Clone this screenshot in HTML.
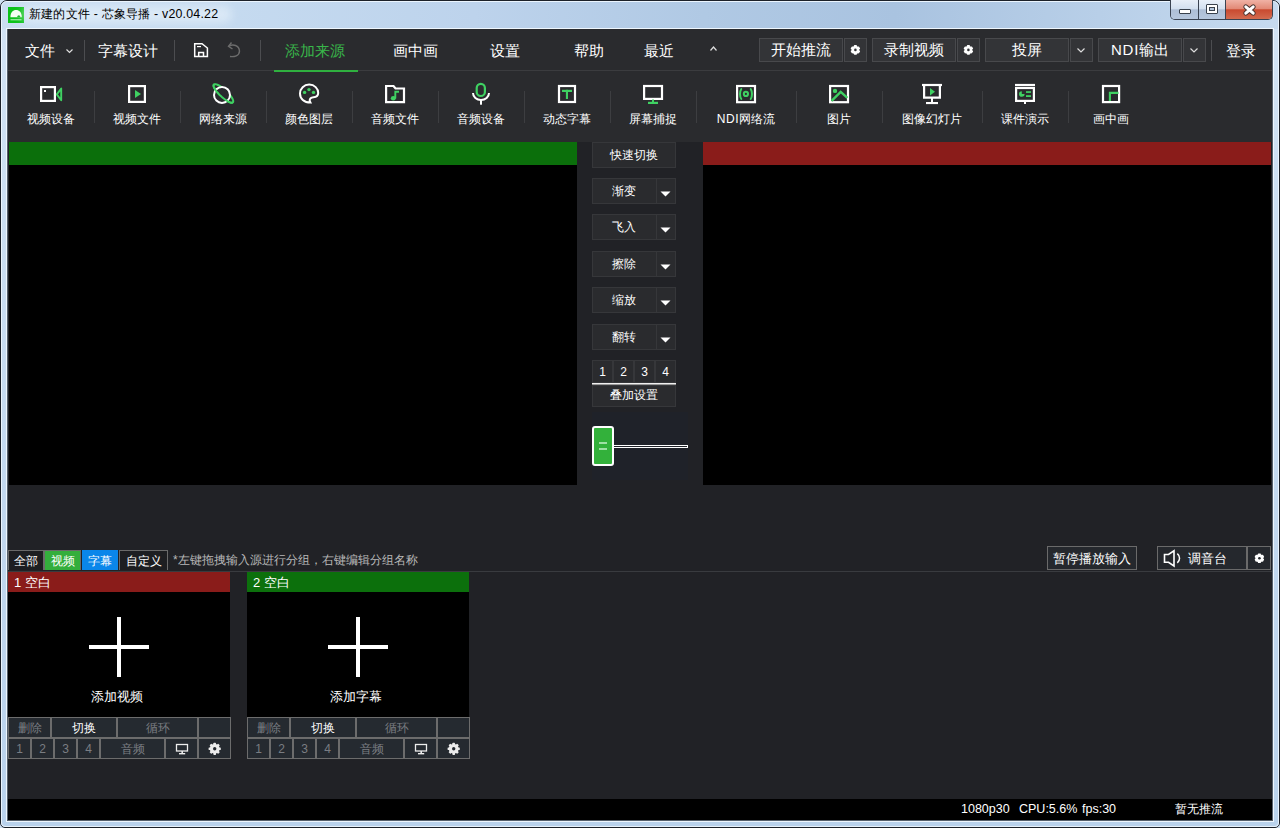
<!DOCTYPE html>
<html><head><meta charset="utf-8">
<style>
*{margin:0;padding:0;box-sizing:border-box}
html,body{width:1280px;height:828px;overflow:hidden;background:#cfe0f2;font-family:"Liberation Sans",sans-serif;color:#fff}
.a{position:absolute}
.t{white-space:nowrap;line-height:1}
.bx{position:absolute;border:1px solid #48494c;background:#323336}
</style></head><body>

<div class="a" style="left:0px;top:0px;width:1280px;height:828px;background:linear-gradient(#d2e3f4,#c2d8ef 60%,#b9d2ec);border:1px solid #1c2129;border-radius:7px 7px 5px 5px"></div>
<div class="a" style="left:1px;top:1px;width:1278px;height:826px;background:transparent;border:1px solid rgba(240,248,255,0.85);border-radius:6px 6px 4px 4px"></div>
<div class="a" style="left:2px;top:2px;width:1276px;height:27px;background:linear-gradient(90deg,#cadef2 0,#c6dbf0 16%,#bdd3ec 37%,#b0c9e4 55%,#a9c3e0 70%,#b8cfe8 86%,#c6daef 100%);border-radius:5px 5px 0 0"></div>
<div class="a" style="left:6px;top:28px;width:1268px;height:794px;background:#eef6fd;"></div>
<div class="a" style="left:7px;top:29px;width:1266px;height:792px;background:#55606c;"></div>
<div class="a" style="left:8px;top:29px;width:1264px;height:791px;background:#222327;"></div>
<svg class="a" style="left:8px;top:7px" width="16" height="16" viewBox="0 0 16 16"><rect width="16" height="16" fill="#0cc21a"/><path d="M2.4,10.2 C2.4,5.2 5,2.9 8.1,2.9 C11.2,2.9 13.8,5.2 13.8,10.2 Z" fill="#f4fff2"/><path d="M9.2,10.3 C9.2,7.5 12.4,7.5 12.4,10.3 Z" fill="#12b21e"/><rect x="2.5" y="12" width="11" height="1.4" fill="#8fe596"/></svg>
<div class="a" style="left:22px;top:6px;width:210px;height:17px;background:rgba(235,244,252,0.55);border-radius:9px;filter:blur(4px)"></div>
<div class="a t" style="left:29px;top:8px;font-size:12.4px;color:#000;letter-spacing:0.2px">新建的文件 - 芯象导播 - v20.04.22</div>
<div class="a" style="left:1170px;top:0;width:103px;height:20px;border:1px solid #3a4351;border-top:none;border-radius:0 0 5px 5px;overflow:hidden;display:flex">
  <div style="width:28px;height:19px;background:linear-gradient(#e8eff8,#d3e0ef 45%,#aebfd6 52%,#b6c7dd);border-right:1px solid #3a4351;position:relative"><div class="a" style="left:8px;top:9px;width:12px;height:5px;background:#fff;border:1px solid #39414c;border-radius:1px"></div></div>
  <div style="width:27px;height:19px;background:linear-gradient(#e8eff8,#d3e0ef 45%,#aebfd6 52%,#b6c7dd);border-right:1px solid #3a4351;position:relative"><div class="a" style="left:7px;top:4px;width:12px;height:10px;background:#fff;border:1px solid #39414c;border-radius:1px"><div class="a" style="left:2px;top:2px;width:6px;height:4px;background:#b4c6dc;border:1px solid #39414c"></div></div></div>
  <div style="width:46px;height:19px;background:linear-gradient(#f0b2a5,#e28a77 45%,#c94a30 52%,#d36b4f);position:relative">
   <svg class="a" style="left:0;top:0" width="46" height="19"><path d="M19.8,6.8 L27.2,13.2 M27.2,6.8 L19.8,13.2" stroke="#4a3430" stroke-width="5" stroke-linecap="round"/><path d="M19.8,6.8 L27.2,13.2 M27.2,6.8 L19.8,13.2" stroke="#fff" stroke-width="3" stroke-linecap="round"/></svg></div>
</div>
<div class="a" style="left:8px;top:29px;width:1264px;height:113px;background:#2a2b2e;"></div>
<div class="a" style="left:8px;top:70px;width:1264px;height:1px;background:#3b3c3f;"></div>
<div class="a t" style="left:25px;top:43px;font-size:15px;color:#fff;">文件</div>
<svg class="a" style="left:0;top:0;overflow:visible" width="1" height="1"></svg>
<div class="a" style="left:84px;top:40px;width:1px;height:21px;background:#4c4d50;"></div>
<div class="a" style="left:174px;top:40px;width:1px;height:21px;background:#4c4d50;"></div>
<div class="a" style="left:260px;top:40px;width:1px;height:21px;background:#4c4d50;"></div>
<div class="a" style="left:1211px;top:40px;width:1px;height:21px;background:#4c4d50;"></div>
<div class="a t" style="left:98px;top:43px;font-size:15px;color:#fff;">字幕设计</div>
<div class="a t" style="left:285px;top:43px;font-size:15px;color:#39b54a;">添加来源</div>
<div class="a" style="left:274px;top:70px;width:84px;height:2px;background:#2fb03f;"></div>
<div class="a t" style="left:393px;top:43px;font-size:15px;color:#fff;">画中画</div>
<div class="a t" style="left:490px;top:43px;font-size:15px;color:#fff;">设置</div>
<div class="a t" style="left:574px;top:43px;font-size:15px;color:#fff;">帮助</div>
<div class="a t" style="left:644px;top:43px;font-size:15px;color:#fff;">最近</div>
<div class="bx" style="left:759px;top:38px;width:84px;height:24px;background:#333437"></div>
<div class="bx" style="left:844px;top:38px;width:23px;height:24px;background:#333437"></div>
<div class="a t" style="left:651.0px;width:300px;text-align:center;top:42px;font-size:15px;color:#fff;">开始推流</div>
<div class="bx" style="left:872px;top:38px;width:84px;height:24px;background:#333437"></div>
<div class="bx" style="left:957px;top:38px;width:23px;height:24px;background:#333437"></div>
<div class="a t" style="left:764.0px;width:300px;text-align:center;top:42px;font-size:15px;color:#fff;">录制视频</div>
<div class="bx" style="left:985px;top:38px;width:84px;height:24px;background:#333437"></div>
<div class="bx" style="left:1070px;top:38px;width:23px;height:24px;background:#333437"></div>
<div class="a t" style="left:877.0px;width:300px;text-align:center;top:42px;font-size:15px;color:#fff;">投屏</div>
<div class="bx" style="left:1098px;top:38px;width:84px;height:24px;background:#333437"></div>
<div class="bx" style="left:1183px;top:38px;width:23px;height:24px;background:#333437"></div>
<div class="a t" style="left:990.0px;width:300px;text-align:center;top:42px;font-size:15px;color:#fff;"><span style="letter-spacing:0.8px">NDI</span>输出</div>
<div class="a t" style="left:1226px;top:43px;font-size:15px;color:#fff;">登录</div>
<div class="a t" style="left:-99px;width:300px;text-align:center;top:113px;font-size:12px;color:#fff;">视频设备</div>
<div class="a t" style="left:-13px;width:300px;text-align:center;top:113px;font-size:12px;color:#fff;">视频文件</div>
<div class="a t" style="left:73px;width:300px;text-align:center;top:113px;font-size:12px;color:#fff;">网络来源</div>
<div class="a t" style="left:159px;width:300px;text-align:center;top:113px;font-size:12px;color:#fff;">颜色图层</div>
<div class="a t" style="left:245px;width:300px;text-align:center;top:113px;font-size:12px;color:#fff;">音频文件</div>
<div class="a t" style="left:331px;width:300px;text-align:center;top:113px;font-size:12px;color:#fff;">音频设备</div>
<div class="a t" style="left:417px;width:300px;text-align:center;top:113px;font-size:12px;color:#fff;">动态字幕</div>
<div class="a t" style="left:503px;width:300px;text-align:center;top:113px;font-size:12px;color:#fff;">屏幕捕捉</div>
<div class="a t" style="left:596px;width:300px;text-align:center;top:113px;font-size:12px;color:#fff;"><span style="letter-spacing:0.6px">NDI</span>网络流</div>
<div class="a t" style="left:689px;width:300px;text-align:center;top:113px;font-size:12px;color:#fff;">图片</div>
<div class="a t" style="left:782px;width:300px;text-align:center;top:113px;font-size:12px;color:#fff;">图像幻灯片</div>
<div class="a t" style="left:875px;width:300px;text-align:center;top:113px;font-size:12px;color:#fff;">课件演示</div>
<div class="a t" style="left:961px;width:300px;text-align:center;top:113px;font-size:12px;color:#fff;">画中画</div>
<div class="a" style="left:94px;top:91px;width:1px;height:32px;background:#3d3e41;"></div>
<div class="a" style="left:180px;top:91px;width:1px;height:32px;background:#3d3e41;"></div>
<div class="a" style="left:266px;top:91px;width:1px;height:32px;background:#3d3e41;"></div>
<div class="a" style="left:352px;top:91px;width:1px;height:32px;background:#3d3e41;"></div>
<div class="a" style="left:438px;top:91px;width:1px;height:32px;background:#3d3e41;"></div>
<div class="a" style="left:524px;top:91px;width:1px;height:32px;background:#3d3e41;"></div>
<div class="a" style="left:610px;top:91px;width:1px;height:32px;background:#3d3e41;"></div>
<div class="a" style="left:696px;top:91px;width:1px;height:32px;background:#3d3e41;"></div>
<div class="a" style="left:796px;top:91px;width:1px;height:32px;background:#3d3e41;"></div>
<div class="a" style="left:882px;top:91px;width:1px;height:32px;background:#3d3e41;"></div>
<div class="a" style="left:982px;top:91px;width:1px;height:32px;background:#3d3e41;"></div>
<div class="a" style="left:1068px;top:91px;width:1px;height:32px;background:#3d3e41;"></div>
<div class="a" style="left:9px;top:142px;width:568px;height:343px;background:#000;"></div>
<div class="a" style="left:9px;top:142px;width:568px;height:23px;background:#0b6f0b;"></div>
<div class="a" style="left:577px;top:142px;width:126px;height:343px;background:#212226;"></div>
<div class="a" style="left:703px;top:142px;width:568px;height:343px;background:#000;"></div>
<div class="a" style="left:703px;top:142px;width:568px;height:23px;background:#8a1c1a;"></div>
<div class="a" style="left:592px;top:142px;width:84px;height:26px;background:#2a2b2e;border:1px solid #36373a"></div>
<div class="a t" style="left:484px;width:300px;text-align:center;top:149px;font-size:12px;color:#fff;">快速切换</div>
<div class="a" style="left:592px;top:178px;width:84px;height:26px;background:#2a2b2e;border:1px solid #36373a"></div>
<div class="a" style="left:656px;top:179px;width:1px;height:24px;background:#36373a;"></div>
<div class="a t" style="left:474px;width:300px;text-align:center;top:185px;font-size:12px;color:#fff;">渐变</div>
<svg class="a" style="left:660px;top:191px" width="11" height="6"><path d="M0.5,0.5 L10.5,0.5 L5.5,5.5Z" fill="#fff"/></svg>
<div class="a" style="left:592px;top:214px;width:84px;height:26px;background:#2a2b2e;border:1px solid #36373a"></div>
<div class="a" style="left:656px;top:215px;width:1px;height:24px;background:#36373a;"></div>
<div class="a t" style="left:474px;width:300px;text-align:center;top:221px;font-size:12px;color:#fff;">飞入</div>
<svg class="a" style="left:660px;top:227px" width="11" height="6"><path d="M0.5,0.5 L10.5,0.5 L5.5,5.5Z" fill="#fff"/></svg>
<div class="a" style="left:592px;top:251px;width:84px;height:26px;background:#2a2b2e;border:1px solid #36373a"></div>
<div class="a" style="left:656px;top:252px;width:1px;height:24px;background:#36373a;"></div>
<div class="a t" style="left:474px;width:300px;text-align:center;top:258px;font-size:12px;color:#fff;">擦除</div>
<svg class="a" style="left:660px;top:264px" width="11" height="6"><path d="M0.5,0.5 L10.5,0.5 L5.5,5.5Z" fill="#fff"/></svg>
<div class="a" style="left:592px;top:287px;width:84px;height:26px;background:#2a2b2e;border:1px solid #36373a"></div>
<div class="a" style="left:656px;top:288px;width:1px;height:24px;background:#36373a;"></div>
<div class="a t" style="left:474px;width:300px;text-align:center;top:294px;font-size:12px;color:#fff;">缩放</div>
<svg class="a" style="left:660px;top:300px" width="11" height="6"><path d="M0.5,0.5 L10.5,0.5 L5.5,5.5Z" fill="#fff"/></svg>
<div class="a" style="left:592px;top:324px;width:84px;height:26px;background:#2a2b2e;border:1px solid #36373a"></div>
<div class="a" style="left:656px;top:325px;width:1px;height:24px;background:#36373a;"></div>
<div class="a t" style="left:474px;width:300px;text-align:center;top:331px;font-size:12px;color:#fff;">翻转</div>
<svg class="a" style="left:660px;top:337px" width="11" height="6"><path d="M0.5,0.5 L10.5,0.5 L5.5,5.5Z" fill="#fff"/></svg>
<div class="a" style="left:592px;top:360px;width:21px;height:23px;background:#2a2b2e;border:1px solid #36373a"></div>
<div class="a t" style="left:452.5px;width:300px;text-align:center;top:366px;font-size:12px;color:#fff;">1</div>
<div class="a" style="left:613px;top:360px;width:21px;height:23px;background:#2a2b2e;border:1px solid #36373a"></div>
<div class="a t" style="left:473.5px;width:300px;text-align:center;top:366px;font-size:12px;color:#fff;">2</div>
<div class="a" style="left:634px;top:360px;width:21px;height:23px;background:#2a2b2e;border:1px solid #36373a"></div>
<div class="a t" style="left:494.5px;width:300px;text-align:center;top:366px;font-size:12px;color:#fff;">3</div>
<div class="a" style="left:655px;top:360px;width:21px;height:23px;background:#2a2b2e;border:1px solid #36373a"></div>
<div class="a t" style="left:515.5px;width:300px;text-align:center;top:366px;font-size:12px;color:#fff;">4</div>
<div class="a" style="left:592px;top:383px;width:84px;height:1px;background:#f0f0f0;"></div>
<div class="a" style="left:592px;top:384px;width:84px;height:1px;background:#9a9a9a;"></div>
<div class="a" style="left:592px;top:385px;width:84px;height:22px;background:#2a2b2e;border:1px solid #36373a"></div>
<div class="a t" style="left:484px;width:300px;text-align:center;top:389px;font-size:12px;color:#fff;">叠加设置</div>
<div class="a" style="left:592px;top:412px;width:96px;height:68px;background:#1f2229;"></div>
<div class="a" style="left:613px;top:445px;width:75px;height:3px;border:1px solid #fff;background:#1f2229"></div>
<div class="a" style="left:592px;top:426px;width:22px;height:40px;background:#33b13b;border:2px solid #fff;border-radius:3px"></div>
<div class="a" style="left:599px;top:442px;width:8px;height:1.5px;background:#9fe0a4;"></div>
<div class="a" style="left:599px;top:448px;width:8px;height:1.5px;background:#9fe0a4;"></div>
<div class="a" style="left:8px;top:485px;width:1264px;height:314px;background:#212226;"></div>
<div class="a" style="left:8px;top:571px;width:1264px;height:1px;background:#393b3f;"></div>
<div class="a" style="left:8px;top:550px;width:36px;height:20px;background:#1d1e21;border:1px solid #6a6a6a;border-bottom:none"></div>
<div class="a t" style="left:-124.0px;width:300px;text-align:center;top:555px;font-size:12px;color:#fff;">全部</div>
<div class="a" style="left:44px;top:550px;width:37px;height:20px;background:#34ae3c;border:1px solid #6a6a6a;border-bottom:none"></div>
<div class="a t" style="left:-87.5px;width:300px;text-align:center;top:555px;font-size:12px;color:#fff;">视频</div>
<div class="a" style="left:82px;top:550px;width:36px;height:20px;background:#0a86ea;border:1px solid #0a86ea;border-bottom:none"></div>
<div class="a t" style="left:-50.0px;width:300px;text-align:center;top:555px;font-size:12px;color:#fff;">字幕</div>
<div class="a" style="left:119px;top:550px;width:49px;height:20px;background:#1d1e21;border:1px solid #6a6a6a;border-bottom:none"></div>
<div class="a t" style="left:-6.5px;width:300px;text-align:center;top:555px;font-size:12px;color:#fff;">自定义</div>
<div class="a t" style="left:173px;top:554px;font-size:12px;color:#b8b8b8;">*左键拖拽输入源进行分组，右键编辑分组名称</div>
<div class="a" style="left:1047px;top:546px;width:90px;height:24px;border:1px solid #6a6a6a;background:#25282d"></div>
<div class="a t" style="left:942px;width:300px;text-align:center;top:552px;font-size:13px;color:#fff;">暂停播放输入</div>
<div class="a" style="left:1157px;top:546px;width:90px;height:24px;border:1px solid #6a6a6a;background:#25282d"></div>
<div class="a" style="left:1247px;top:546px;width:24px;height:24px;border:1px solid #6a6a6a;background:#25282d"></div>
<div class="a t" style="left:1188px;top:552px;font-size:13px;color:#fff;">调音台</div>
<div class="a" style="left:8px;top:572px;width:222px;height:20px;background:#8a1c1a;"></div>
<div class="a t" style="left:14px;top:575.5px;font-size:13px;color:#fff;word-spacing:0.3px">1 空白</div>
<div class="a" style="left:8px;top:592px;width:222px;height:125px;background:#000;"></div>
<div class="a" style="left:89px;top:645px;width:60px;height:4px;background:#fff;"></div>
<div class="a" style="left:117px;top:617px;width:4px;height:60px;background:#fff;"></div>
<div class="a t" style="left:-33px;width:300px;text-align:center;top:690px;font-size:13px;color:#fff;">添加视频</div>
<div class="a" style="left:8px;top:717px;width:43px;height:21px;background:#252a30;border:1px solid #6c6c6c"></div>
<div class="a t" style="left:-120.5px;width:300px;text-align:center;top:722px;font-size:12px;color:#7a7d82;">删除</div>
<div class="a" style="left:51px;top:717px;width:66px;height:21px;background:#252a30;border:1px solid #6c6c6c"></div>
<div class="a t" style="left:-66.0px;width:300px;text-align:center;top:722px;font-size:12px;color:#fff;">切换</div>
<div class="a" style="left:117px;top:717px;width:81px;height:21px;background:#252a30;border:1px solid #6c6c6c"></div>
<div class="a t" style="left:7.5px;width:300px;text-align:center;top:722px;font-size:12px;color:#7a7d82;">循环</div>
<div class="a" style="left:198px;top:717px;width:33px;height:21px;background:#252a30;border:1px solid #6c6c6c"></div>
<div class="a" style="left:8px;top:738px;width:23px;height:21px;background:#252a30;border:1px solid #6c6c6c"></div>
<div class="a t" style="left:-130.5px;width:300px;text-align:center;top:743px;font-size:12px;color:#7a7d82;">1</div>
<div class="a" style="left:31px;top:738px;width:23px;height:21px;background:#252a30;border:1px solid #6c6c6c"></div>
<div class="a t" style="left:-107.5px;width:300px;text-align:center;top:743px;font-size:12px;color:#7a7d82;">2</div>
<div class="a" style="left:54px;top:738px;width:23px;height:21px;background:#252a30;border:1px solid #6c6c6c"></div>
<div class="a t" style="left:-84.5px;width:300px;text-align:center;top:743px;font-size:12px;color:#7a7d82;">3</div>
<div class="a" style="left:77px;top:738px;width:23px;height:21px;background:#252a30;border:1px solid #6c6c6c"></div>
<div class="a t" style="left:-61.5px;width:300px;text-align:center;top:743px;font-size:12px;color:#7a7d82;">4</div>
<div class="a" style="left:100px;top:738px;width:65px;height:21px;background:#252a30;border:1px solid #6c6c6c"></div>
<div class="a t" style="left:-17.5px;width:300px;text-align:center;top:743px;font-size:12px;color:#7a7d82;">音频</div>
<div class="a" style="left:165px;top:738px;width:33px;height:21px;background:#252a30;border:1px solid #6c6c6c"></div>
<div class="a" style="left:198px;top:738px;width:33px;height:21px;background:#252a30;border:1px solid #6c6c6c"></div>
<div class="a" style="left:247px;top:572px;width:222px;height:20px;background:#0c700c;"></div>
<div class="a t" style="left:253px;top:575.5px;font-size:13px;color:#fff;word-spacing:0.3px">2 空白</div>
<div class="a" style="left:247px;top:592px;width:222px;height:125px;background:#000;"></div>
<div class="a" style="left:328px;top:645px;width:60px;height:4px;background:#fff;"></div>
<div class="a" style="left:356px;top:617px;width:4px;height:60px;background:#fff;"></div>
<div class="a t" style="left:206px;width:300px;text-align:center;top:690px;font-size:13px;color:#fff;">添加字幕</div>
<div class="a" style="left:247px;top:717px;width:43px;height:21px;background:#252a30;border:1px solid #6c6c6c"></div>
<div class="a t" style="left:118.5px;width:300px;text-align:center;top:722px;font-size:12px;color:#7a7d82;">删除</div>
<div class="a" style="left:290px;top:717px;width:66px;height:21px;background:#252a30;border:1px solid #6c6c6c"></div>
<div class="a t" style="left:173.0px;width:300px;text-align:center;top:722px;font-size:12px;color:#fff;">切换</div>
<div class="a" style="left:356px;top:717px;width:81px;height:21px;background:#252a30;border:1px solid #6c6c6c"></div>
<div class="a t" style="left:246.5px;width:300px;text-align:center;top:722px;font-size:12px;color:#7a7d82;">循环</div>
<div class="a" style="left:437px;top:717px;width:33px;height:21px;background:#252a30;border:1px solid #6c6c6c"></div>
<div class="a" style="left:247px;top:738px;width:23px;height:21px;background:#252a30;border:1px solid #6c6c6c"></div>
<div class="a t" style="left:108.5px;width:300px;text-align:center;top:743px;font-size:12px;color:#7a7d82;">1</div>
<div class="a" style="left:270px;top:738px;width:23px;height:21px;background:#252a30;border:1px solid #6c6c6c"></div>
<div class="a t" style="left:131.5px;width:300px;text-align:center;top:743px;font-size:12px;color:#7a7d82;">2</div>
<div class="a" style="left:293px;top:738px;width:23px;height:21px;background:#252a30;border:1px solid #6c6c6c"></div>
<div class="a t" style="left:154.5px;width:300px;text-align:center;top:743px;font-size:12px;color:#7a7d82;">3</div>
<div class="a" style="left:316px;top:738px;width:23px;height:21px;background:#252a30;border:1px solid #6c6c6c"></div>
<div class="a t" style="left:177.5px;width:300px;text-align:center;top:743px;font-size:12px;color:#7a7d82;">4</div>
<div class="a" style="left:339px;top:738px;width:65px;height:21px;background:#252a30;border:1px solid #6c6c6c"></div>
<div class="a t" style="left:221.5px;width:300px;text-align:center;top:743px;font-size:12px;color:#7a7d82;">音频</div>
<div class="a" style="left:404px;top:738px;width:33px;height:21px;background:#252a30;border:1px solid #6c6c6c"></div>
<div class="a" style="left:437px;top:738px;width:33px;height:21px;background:#252a30;border:1px solid #6c6c6c"></div>
<div class="a" style="left:8px;top:799px;width:1264px;height:21px;background:#000;"></div>
<div class="a t" style="left:961px;top:803px;font-size:12.5px;color:#fff;">1080p30</div>
<div class="a t" style="left:1019px;top:803px;font-size:12.5px;color:#fff;">CPU:5.6%</div>
<div class="a t" style="left:1082px;top:803px;font-size:12.5px;color:#fff;">fps:30</div>
<div class="a t" style="left:1175px;top:803px;font-size:12px;color:#fff;">暂无推流</div>
<svg class="a" style="left:0;top:0" width="1280" height="828"><path d="M66.5,49.5 L69.5,52.5 L72.5,49.5" fill="none" stroke="#ddd" stroke-width="1.2"/><path d="M710.5,50.5 L713.5,47 L716.5,50.5" fill="none" stroke="#ddd" stroke-width="1.2"/><path d="M1077.5,48.5 L1081,52 L1084.5,48.5" fill="none" stroke="#ddd" stroke-width="1.2"/><path d="M1190.5,48.5 L1194,52 L1197.5,48.5" fill="none" stroke="#ddd" stroke-width="1.2"/><path d="M194.7,43.7 L202,43.7 L207.4,48 L207.4,56.4 L194.7,56.4 Z" fill="none" stroke="#fff" stroke-width="1.5"/><rect x="197" y="46" width="4" height="1.2" fill="#fff"/><path d="M198.7,56.4 L198.7,52.6 L203.5,52.6 L203.5,56.4" fill="none" stroke="#fff" stroke-width="1.5"/><path d="M229,46 C233,44 239,45 239.5,51 C239.5,56 234,57 230,56.5" fill="none" stroke="#6c6c6c" stroke-width="1.4"/><path d="M231.5,42.5 L228.5,46.3 L232.5,49" fill="none" stroke="#6c6c6c" stroke-width="1.4"/><circle cx="855.4" cy="49.9" r="3.9" fill="#fff"/><rect x="853.90" y="45.10" width="3.00" height="4.80" rx="0.6" fill="#fff" transform="rotate(0.0 855.4 49.9)"/><rect x="853.90" y="45.10" width="3.00" height="4.80" rx="0.6" fill="#fff" transform="rotate(60.0 855.4 49.9)"/><rect x="853.90" y="45.10" width="3.00" height="4.80" rx="0.6" fill="#fff" transform="rotate(120.0 855.4 49.9)"/><rect x="853.90" y="45.10" width="3.00" height="4.80" rx="0.6" fill="#fff" transform="rotate(180.0 855.4 49.9)"/><rect x="853.90" y="45.10" width="3.00" height="4.80" rx="0.6" fill="#fff" transform="rotate(240.0 855.4 49.9)"/><rect x="853.90" y="45.10" width="3.00" height="4.80" rx="0.6" fill="#fff" transform="rotate(300.0 855.4 49.9)"/><circle cx="855.4" cy="49.9" r="1.3" fill="#333437"/><circle cx="968.4" cy="49.9" r="3.9" fill="#fff"/><rect x="966.90" y="45.10" width="3.00" height="4.80" rx="0.6" fill="#fff" transform="rotate(0.0 968.4 49.9)"/><rect x="966.90" y="45.10" width="3.00" height="4.80" rx="0.6" fill="#fff" transform="rotate(60.0 968.4 49.9)"/><rect x="966.90" y="45.10" width="3.00" height="4.80" rx="0.6" fill="#fff" transform="rotate(120.0 968.4 49.9)"/><rect x="966.90" y="45.10" width="3.00" height="4.80" rx="0.6" fill="#fff" transform="rotate(180.0 968.4 49.9)"/><rect x="966.90" y="45.10" width="3.00" height="4.80" rx="0.6" fill="#fff" transform="rotate(240.0 968.4 49.9)"/><rect x="966.90" y="45.10" width="3.00" height="4.80" rx="0.6" fill="#fff" transform="rotate(300.0 968.4 49.9)"/><circle cx="968.4" cy="49.9" r="1.3" fill="#333437"/><rect x="41.1" y="87.1" width="13.8" height="13.8" fill="none" stroke="#fff" stroke-width="2.2"/><rect x="44" y="90" width="2" height="2" fill="#fff"/><path d="M61.2,88.6 L61.2,100.2 L56.8,94.4 Z" fill="none" stroke="#3fd162" stroke-width="1.9" stroke-linejoin="round"/><rect x="129.1" y="86.1" width="15.8" height="15.8" fill="none" stroke="#fff" stroke-width="2.2"/><path d="M135,90 L141,94 L135,98Z" fill="#3fd162"/><path d="M232.91,102.27 L232.50,102.54 L231.93,102.66 L231.22,102.63 L230.37,102.43 L229.41,102.08 L228.34,101.58 L227.19,100.94 L225.97,100.18 L224.71,99.29 L223.42,98.31 L222.14,97.24 L220.88,96.11 L219.66,94.93 L218.50,93.72 L217.43,92.51 L216.46,91.31 L215.61,90.15 L214.89,89.04 L214.32,88.01 L213.90,87.07 L213.65,86.24 L213.56,85.54 L213.64,84.96 L213.89,84.53 L214.30,84.26 L214.87,84.14 L215.58,84.17 L216.43,84.37 L217.39,84.72 L218.46,85.22 L219.61,85.86 L220.83,86.62 L222.09,87.51 L223.38,88.49 L224.66,89.56 L225.92,90.69 L227.14,91.87 L228.30,93.08 L229.37,94.29 L230.34,95.49 L231.19,96.65 L231.91,97.76 L232.48,98.79 L232.90,99.73 L233.15,100.56 L233.24,101.26 L233.16,101.84Z" fill="none" stroke="#3fd162" stroke-width="2"/><circle cx="222" cy="94.9" r="7.2" fill="#2a2b2e"/><circle cx="222" cy="94.9" r="8" fill="none" stroke="#fff" stroke-width="2"/><path d="M232.91,102.27 L232.50,102.54 L231.93,102.66 L231.22,102.63 L230.37,102.43 L229.41,102.08 L228.34,101.58 L227.19,100.94 L225.97,100.18 L224.71,99.29 L223.42,98.31 L222.14,97.24 L220.88,96.11 L219.66,94.93 L218.50,93.72 L217.43,92.51 L216.46,91.31 L215.61,90.15 L214.89,89.04 L214.32,88.01 L213.90,87.07 L213.65,86.24 L213.56,85.54 L213.64,84.96 L213.89,84.53" fill="none" stroke="#3fd162" stroke-width="2"/><path d="M310.5,102.6 C304,102.6 300,98.5 300,93.5 C300,88.5 304,84.6 309.2,84.6 C314.5,84.6 318.2,88.5 318.2,93 C318.2,95.5 317,97 313.5,97.2 C311,97.3 309.5,98.8 309.7,100.6 C309.8,101.6 310.3,102.2 310.5,102.6 Z" fill="none" stroke="#fff" stroke-width="2"/><circle cx="304.6" cy="92.4" r="1.7" fill="#3fd162"/><circle cx="309" cy="89.6" r="1.7" fill="#3fd162"/><circle cx="313.5" cy="92.4" r="1.7" fill="#3fd162"/><path d="M386.1,86 L393.5,86 L395.5,88.5 L404,88.5 L404,102.1 L386.1,102.1 Z" fill="none" stroke="#fff" stroke-width="2.2"/><path d="M395.3,98.5 L395.3,91.7 L399,91.7" fill="none" stroke="#3fd162" stroke-width="1.9"/><ellipse cx="393.3" cy="98.2" rx="2.5" ry="2.3" fill="#3fd162"/><rect x="476.7" y="83.8" width="8.2" height="12.2" rx="4.1" fill="none" stroke="#3fd162" stroke-width="2.2"/><path d="M473,93 A8,7 0 0 0 489,93" fill="none" stroke="#fff" stroke-width="2"/><rect x="480" y="100" width="2" height="4.7" fill="#fff"/><rect x="559" y="86" width="16" height="16" fill="none" stroke="#fff" stroke-width="2.2"/><rect x="562" y="89.8" width="10" height="2.2" fill="#3fd162"/><rect x="565.9" y="89.8" width="2.1" height="9.2" fill="#3fd162"/><rect x="644.1" y="86" width="17.9" height="12.9" fill="none" stroke="#fff" stroke-width="2.2"/><rect x="652" y="99.5" width="2" height="3" fill="#3fd162"/><rect x="648" y="101.8" width="10" height="2.2" fill="#3fd162"/><rect x="737.1" y="86" width="17.9" height="16.2" fill="none" stroke="#fff" stroke-width="2.2"/><circle cx="745.9" cy="93.9" r="2.1" fill="none" stroke="#3fd162" stroke-width="2"/><path d="M741.3,89 C739.6,91.5 739.6,96.5 741.3,99" fill="none" stroke="#3fd162" stroke-width="2" stroke-linecap="round"/><path d="M750.7,89 C752.4,91.5 752.4,96.5 750.7,99" fill="none" stroke="#3fd162" stroke-width="2" stroke-linecap="round"/><rect x="830.1" y="86" width="17.9" height="16.2" fill="none" stroke="#fff" stroke-width="2.2"/><circle cx="835" cy="90.9" r="2.2" fill="#3fd162"/><path d="M831.6,100.8 L840.7,91.9 L847.4,97.9" fill="none" stroke="#3fd162" stroke-width="2.4"/><rect x="922" y="83.9" width="20" height="2.2" fill="#fff"/><path d="M924.1,85 L924.1,97.7 L939.9,97.7 L939.9,85" fill="none" stroke="#fff" stroke-width="2.2"/><rect x="931" y="98" width="2" height="4" fill="#fff"/><rect x="926" y="102" width="12" height="2.1" fill="#fff"/><path d="M930,88 L935,91.7 L930,95.5Z" fill="#3fd162"/><rect x="1015" y="83.9" width="20" height="2.2" fill="#fff"/><rect x="1016.1" y="88" width="17.8" height="12.9" fill="none" stroke="#fff" stroke-width="2.2"/><rect x="1024" y="101.5" width="2" height="2.5" fill="#fff"/><path d="M1021.8,94 L1021.8,91.2 A2.8,2.8 0 1 0 1024.6,94 Z" fill="#3fd162"/><rect x="1026" y="91.2" width="5" height="1.7" fill="#3fd162"/><rect x="1026" y="95.2" width="5" height="1.8" fill="#3fd162"/><rect x="1103" y="86" width="16.1" height="16.1" fill="none" stroke="#fff" stroke-width="2.2"/><path d="M1109.9,101 L1109.9,92.9 L1118.5,92.9" fill="none" stroke="#3fd162" stroke-width="2.1"/><rect x="176.5" y="744.5" width="11" height="6.5" fill="none" stroke="#ececec" stroke-width="1.3"/><rect x="181.4" y="751" width="1.6" height="2.2" fill="#ececec"/><rect x="179" y="753" width="6.2" height="1.4" fill="#ececec"/><circle cx="214.7" cy="748.8" r="4.9" fill="#ececec"/><rect x="213.40" y="742.70" width="2.60" height="6.10" rx="0.6" fill="#ececec" transform="rotate(0.0 214.7 748.8)"/><rect x="213.40" y="742.70" width="2.60" height="6.10" rx="0.6" fill="#ececec" transform="rotate(45.0 214.7 748.8)"/><rect x="213.40" y="742.70" width="2.60" height="6.10" rx="0.6" fill="#ececec" transform="rotate(90.0 214.7 748.8)"/><rect x="213.40" y="742.70" width="2.60" height="6.10" rx="0.6" fill="#ececec" transform="rotate(135.0 214.7 748.8)"/><rect x="213.40" y="742.70" width="2.60" height="6.10" rx="0.6" fill="#ececec" transform="rotate(180.0 214.7 748.8)"/><rect x="213.40" y="742.70" width="2.60" height="6.10" rx="0.6" fill="#ececec" transform="rotate(225.0 214.7 748.8)"/><rect x="213.40" y="742.70" width="2.60" height="6.10" rx="0.6" fill="#ececec" transform="rotate(270.0 214.7 748.8)"/><rect x="213.40" y="742.70" width="2.60" height="6.10" rx="0.6" fill="#ececec" transform="rotate(315.0 214.7 748.8)"/><circle cx="214.7" cy="748.8" r="1.7" fill="#252a30"/><rect x="415.5" y="744.5" width="11" height="6.5" fill="none" stroke="#ececec" stroke-width="1.3"/><rect x="420.4" y="751" width="1.6" height="2.2" fill="#ececec"/><rect x="418" y="753" width="6.2" height="1.4" fill="#ececec"/><circle cx="453.7" cy="748.8" r="4.9" fill="#ececec"/><rect x="452.40" y="742.70" width="2.60" height="6.10" rx="0.6" fill="#ececec" transform="rotate(0.0 453.7 748.8)"/><rect x="452.40" y="742.70" width="2.60" height="6.10" rx="0.6" fill="#ececec" transform="rotate(45.0 453.7 748.8)"/><rect x="452.40" y="742.70" width="2.60" height="6.10" rx="0.6" fill="#ececec" transform="rotate(90.0 453.7 748.8)"/><rect x="452.40" y="742.70" width="2.60" height="6.10" rx="0.6" fill="#ececec" transform="rotate(135.0 453.7 748.8)"/><rect x="452.40" y="742.70" width="2.60" height="6.10" rx="0.6" fill="#ececec" transform="rotate(180.0 453.7 748.8)"/><rect x="452.40" y="742.70" width="2.60" height="6.10" rx="0.6" fill="#ececec" transform="rotate(225.0 453.7 748.8)"/><rect x="452.40" y="742.70" width="2.60" height="6.10" rx="0.6" fill="#ececec" transform="rotate(270.0 453.7 748.8)"/><rect x="452.40" y="742.70" width="2.60" height="6.10" rx="0.6" fill="#ececec" transform="rotate(315.0 453.7 748.8)"/><circle cx="453.7" cy="748.8" r="1.7" fill="#252a30"/><path d="M1164.5,554.5 L1168.5,554.5 L1174,550.8 L1174,566 L1168.5,562.3 L1164.5,562.3 Z" fill="none" stroke="#fff" stroke-width="1.6"/><path d="M1177.3,553.6 C1180.3,556 1180.3,560.5 1177.3,562.8" fill="none" stroke="#fff" stroke-width="1.5"/><circle cx="1259.4" cy="558.2" r="3.9" fill="#fff"/><rect x="1257.90" y="553.40" width="3.00" height="4.80" rx="0.6" fill="#fff" transform="rotate(0.0 1259.4 558.2)"/><rect x="1257.90" y="553.40" width="3.00" height="4.80" rx="0.6" fill="#fff" transform="rotate(60.0 1259.4 558.2)"/><rect x="1257.90" y="553.40" width="3.00" height="4.80" rx="0.6" fill="#fff" transform="rotate(120.0 1259.4 558.2)"/><rect x="1257.90" y="553.40" width="3.00" height="4.80" rx="0.6" fill="#fff" transform="rotate(180.0 1259.4 558.2)"/><rect x="1257.90" y="553.40" width="3.00" height="4.80" rx="0.6" fill="#fff" transform="rotate(240.0 1259.4 558.2)"/><rect x="1257.90" y="553.40" width="3.00" height="4.80" rx="0.6" fill="#fff" transform="rotate(300.0 1259.4 558.2)"/><circle cx="1259.4" cy="558.2" r="1.3" fill="#25282d"/></svg>
</body></html>
